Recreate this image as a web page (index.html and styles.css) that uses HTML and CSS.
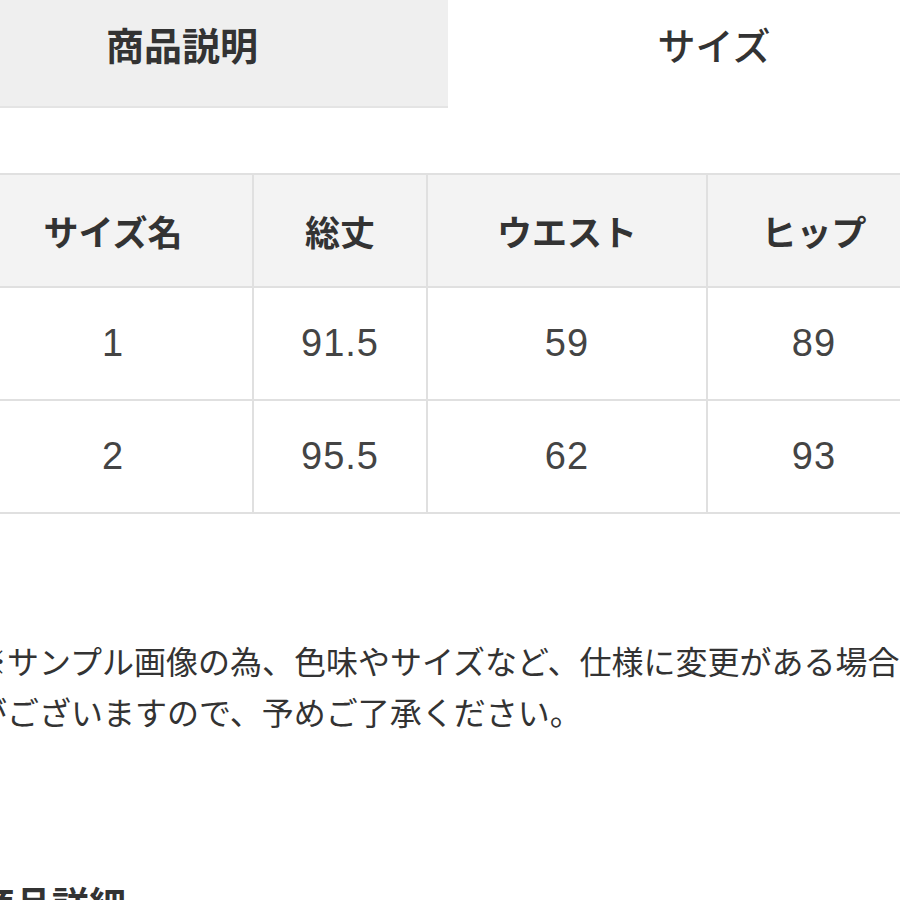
FILE: index.html
```html
<!DOCTYPE html>
<html lang="ja">
<head>
<meta charset="utf-8">
<link rel="stylesheet" href="styles.css">
</head>
<body>
<div class="page">
  <div class="tabs">
    <div class="tab tab-inactive">商品説明</div>
    <div class="tab tab-active">サイズ</div>
  </div>
  <table class="size-table">
    <thead>
      <tr>
        <th class="c1">サイズ名</th>
        <th class="c2">総丈</th>
        <th class="c3">ウエスト</th>
        <th class="c4">ヒップ</th>
      </tr>
    </thead>
    <tbody>
      <tr><td>1</td><td>91.5</td><td>59</td><td>89</td></tr>
      <tr><td>2</td><td>95.5</td><td>62</td><td>93</td></tr>
    </tbody>
  </table>
  <p class="note">※サンプル画像の為、色味やサイズなど、仕様に変更がある場合がございますので、予めご了承ください。</p>
  <h2 class="section-title">商品詳細</h2>
</div>
</body>
</html>
```

FILE: styles.css
```css
html, body {
  margin: 0;
  padding: 0;
  background: #ffffff;
  overflow: hidden;
  height: 900px;
}
body {
  font-family: "Noto Sans CJK JP", "Noto Sans", sans-serif;
  color: #333333;
}
.page {
  margin-left: -28px;
  width: 948px;
}
.tabs {
  display: flex;
  margin-left: -56px;
  width: 1064px;
  height: 108px;
}
.tab {
  flex: 0 0 532px;
  box-sizing: border-box;
  text-align: center;
  font-size: 38px;
  line-height: 46px;
  padding-top: 21px;
  color: #333333;
}
.tab-inactive {
  background: #efefef;
  border-bottom: 2px solid #e4e4e4;
  font-weight: 700;
}
.tab-active {
  background: #ffffff;
  font-weight: 500;
}
.size-table {
  margin-top: 65px;
  border-collapse: collapse;
  width: 948px;
  table-layout: fixed;
}
.size-table th,
.size-table td {
  border: 2px solid #e0e0e0;
  text-align: center;
  height: 113px;
  padding: 0;
  box-sizing: border-box;
}
.size-table th {
  background: #f3f3f3;
  font-size: 35px;
  font-weight: 700;
  color: #333333;
}
.size-table td {
  font-family: "Liberation Sans", "Noto Sans CJK JP", sans-serif;
  font-size: 38px;
  letter-spacing: 1px;
  color: #444444;
}
.c1 { width: 280px; }
.c2 { width: 174px; }
.c3 { width: 280px; }
.c4 { width: 214px; }
.note {
  margin: 121px 0 0 3px;
  width: 930px;
  font-size: 32px;
  line-height: 51px;
  color: #333333;
}
.section-title {
  margin: 144px 0 0 6px;
  font-size: 37px;
  line-height: 44px;
  font-weight: 700;
  color: #333333;
}
```
